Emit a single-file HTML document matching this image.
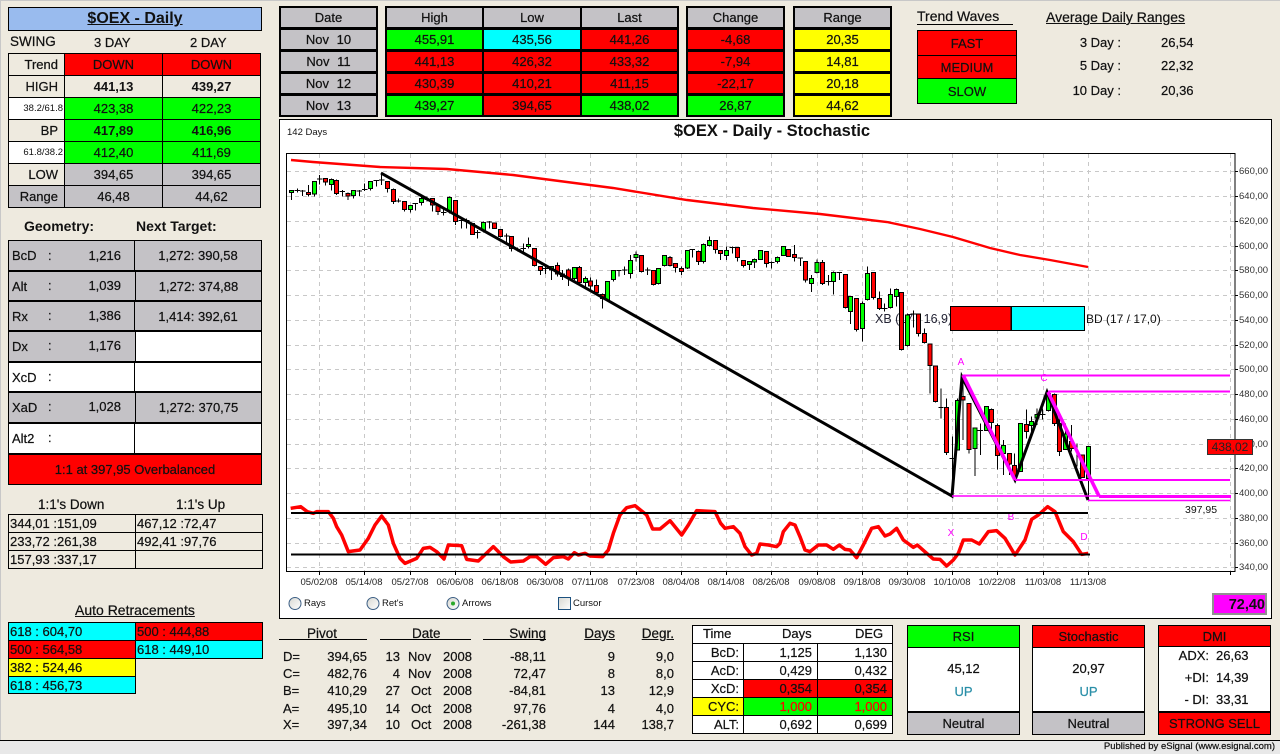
<!DOCTYPE html>
<html><head><meta charset="utf-8"><title>$OEX - Daily</title>
<style>
html,body{margin:0;padding:0}
body{position:relative;width:1280px;height:754px;overflow:hidden;background:#eeeadf;font:13px "Liberation Sans",Arial,sans-serif;color:#111;-webkit-text-stroke:.22px #111}
.c{position:absolute;box-sizing:border-box;display:flex;align-items:center;justify-content:center;white-space:nowrap}
.b{border:1px solid #000}
.t{position:absolute;white-space:nowrap;line-height:16px}
.r{position:absolute;white-space:nowrap;line-height:16px;text-align:right}
.g{background:#c4c2c6}.re{background:#f00}.gr{background:#0f0}.y{background:#ff0}.cy{background:#0ff}.w{background:#fff}.p{background:#eeeadf}
.B{font-weight:bold;-webkit-text-stroke:0}
.l{justify-content:flex-start;padding-left:1px}
.e{justify-content:flex-end;padding-right:5px}
svg{position:absolute;left:0;top:0}
svg text{font-family:"Liberation Sans",Arial,sans-serif;-webkit-text-stroke:0}
</style></head><body>
<div style="position:absolute;left:0;top:0;width:1280px;height:1px;background:#c8c8c8"></div>
<div style="position:absolute;left:0;top:0;width:1px;height:754px;background:#c8c8c8"></div>
<div style="position:absolute;left:0;top:740px;width:1280px;height:14px;background:#e8e8e8;border-top:1px solid #000;box-sizing:border-box"></div>
<div class="t" style="right:5px;top:740px;font-size:9.5px;line-height:14px">Published by eSignal (www.esignal.com)</div>

<!-- title -->
<div class="c b B" style="left:8px;top:7px;width:254px;height:24px;background:#99bbee;font-size:16px;text-decoration:underline">$OEX - Daily</div>
<div class="t" style="left:10px;top:34px;font-size:13.5px">SWING</div>
<div class="t" style="left:94px;top:35px">3 DAY</div>
<div class="t" style="left:190px;top:35px">2 DAY</div>

<!-- swing table -->
<div class="c b p e" style="left:8px;top:53px;width:57px;height:23px;padding-right:6px">Trend</div>
<div class="c b re" style="left:64px;top:53px;width:99px;height:23px">DOWN</div>
<div class="c b re" style="left:162px;top:53px;width:99px;height:23px">DOWN</div>
<div class="c b p e" style="left:8px;top:75px;width:57px;height:23px;padding-right:6px">HIGH</div>
<div class="c b p B" style="left:64px;top:75px;width:99px;height:23px">441,13</div>
<div class="c b p B" style="left:162px;top:75px;width:99px;height:23px">439,27</div>
<div class="c b w e" style="left:8px;top:97px;width:57px;height:23px;font-size:9.5px;padding-right:1px;-webkit-text-stroke:0">38.2/61.8</div>
<div class="c b gr" style="left:64px;top:97px;width:99px;height:23px">423,38</div>
<div class="c b gr" style="left:162px;top:97px;width:99px;height:23px">422,23</div>
<div class="c b p e" style="left:8px;top:119px;width:57px;height:23px;padding-right:6px">BP</div>
<div class="c b gr B" style="left:64px;top:119px;width:99px;height:23px">417,89</div>
<div class="c b gr B" style="left:162px;top:119px;width:99px;height:23px">416,96</div>
<div class="c b w e" style="left:8px;top:141px;width:57px;height:23px;font-size:9.5px;padding-right:1px;-webkit-text-stroke:0">61.8/38.2</div>
<div class="c b gr" style="left:64px;top:141px;width:99px;height:23px">412,40</div>
<div class="c b gr" style="left:162px;top:141px;width:99px;height:23px">411,69</div>
<div class="c b p e" style="left:8px;top:163px;width:57px;height:23px;padding-right:6px">LOW</div>
<div class="c b g" style="left:64px;top:163px;width:99px;height:23px">394,65</div>
<div class="c b g" style="left:162px;top:163px;width:99px;height:23px">394,65</div>
<div class="c b g e" style="left:8px;top:185px;width:57px;height:23px;padding-right:6px">Range</div>
<div class="c b g" style="left:64px;top:185px;width:99px;height:23px">46,48</div>
<div class="c b g" style="left:162px;top:185px;width:99px;height:23px">44,62</div>

<div class="t B" style="left:24px;top:218px;font-size:14px">Geometry:</div>
<div class="t B" style="left:136px;top:218px;font-size:14px">Next Target:</div>

<!-- geometry -->
<div style="position:absolute;left:8px;top:240px;width:254px;height:245px;background:#000"></div>
<div class="c g l" style="left:9px;top:241px;width:125px;height:29px;padding-left:3px">BcD</div><div class="c g" style="left:135px;top:241px;width:126px;height:29px">1,272: 390,58</div>
<div class="c g l" style="left:9px;top:272px;width:126px;height:28px;padding-left:3px">Alt</div><div class="c g" style="left:136px;top:272px;width:125px;height:28px">1,272: 374,88</div>
<div class="c g l" style="left:9px;top:302px;width:125px;height:28px;padding-left:3px">Rx</div><div class="c g" style="left:135px;top:302px;width:126px;height:28px">1,414: 392,61</div>
<div class="c g l" style="left:9px;top:332px;width:126px;height:29px;padding-left:3px">Dx</div><div class="c w" style="left:136px;top:332px;width:125px;height:29px"></div>
<div class="c w l" style="left:9px;top:363px;width:125px;height:28px;padding-left:3px">XcD</div><div class="c w" style="left:135px;top:363px;width:126px;height:28px"></div>
<div class="c g l" style="left:9px;top:393px;width:126px;height:29px;padding-left:3px">XaD</div><div class="c g" style="left:136px;top:393px;width:125px;height:29px">1,272: 370,75</div>
<div class="c w l" style="left:9px;top:424px;width:125px;height:29px;padding-left:3px">Alt2</div><div class="c w" style="left:135px;top:424px;width:126px;height:29px"></div>
<div class="c re" style="left:9px;top:455px;width:252px;height:29px">1:1 at 397,95 Overbalanced</div>
<div class="t" style="left:48px;top:248px">:</div><div class="t" style="left:48px;top:278px">:</div><div class="t" style="left:48px;top:308px">:</div><div class="t" style="left:48px;top:338px">:</div><div class="t" style="left:48px;top:369px">:</div><div class="t" style="left:48px;top:399px">:</div><div class="t" style="left:48px;top:430px">:</div>
<div class="r" style="left:60px;width:61px;top:248px">1,216</div>
<div class="r" style="left:60px;width:61px;top:278px">1,039</div>
<div class="r" style="left:60px;width:61px;top:308px">1,386</div>
<div class="r" style="left:60px;width:61px;top:338px">1,176</div>
<div class="r" style="left:60px;width:61px;top:399px">1,028</div>

<!-- 1:1 -->
<div class="t" style="left:38px;top:497px;font-size:13.5px">1:1's Down</div>
<div class="t" style="left:176px;top:497px;font-size:13.5px">1:1's Up</div>
<div class="c b l" style="left:8px;top:514px;width:128px;height:19px">344,01 :151,09</div><div class="c b l" style="left:135px;top:514px;width:128px;height:19px">467,12 :72,47</div>
<div class="c b l" style="left:8px;top:532px;width:128px;height:19px">233,72 :261,38</div><div class="c b l" style="left:135px;top:532px;width:128px;height:19px">492,41 :97,76</div>
<div class="c b l" style="left:8px;top:550px;width:128px;height:19px">157,93 :337,17</div><div class="c b l" style="left:135px;top:550px;width:128px;height:19px"></div>

<div class="t" style="left:75px;top:602px;text-decoration:underline;font-size:14px">Auto Retracements</div>
<div class="c b cy l" style="left:8px;top:622px;width:128px;height:19px">618 : 604,70</div><div class="c b re l" style="left:135px;top:622px;width:128px;height:19px">500 : 444,88</div>
<div class="c b re l" style="left:8px;top:640px;width:128px;height:19px">500 : 564,58</div><div class="c b cy l" style="left:135px;top:640px;width:128px;height:19px">618 : 449,10</div>
<div class="c b y l" style="left:8px;top:658px;width:128px;height:19px">382 : 524,46</div>
<div class="c b cy l" style="left:8px;top:676px;width:128px;height:18px">618 : 456,73</div>

<!-- date table -->
<div style="position:absolute;left:279px;top:6px;width:99px;height:111px;background:#000"></div>
<div class="c g" style="left:281px;top:8px;width:95px;height:19px">Date</div>
<div class="c g" style="left:281px;top:30px;width:95px;height:19px;word-spacing:4px">Nov 10</div>
<div class="c g" style="left:281px;top:52px;width:95px;height:19px;word-spacing:4px">Nov 11</div>
<div class="c g" style="left:281px;top:74px;width:95px;height:19px;word-spacing:4px">Nov 12</div>
<div class="c g" style="left:281px;top:96px;width:95px;height:19px;word-spacing:4px">Nov 13</div>

<!-- HLC -->
<div style="position:absolute;left:385px;top:6px;width:294px;height:111px;background:#000"></div>
<div class="c g" style="left:387px;top:8px;width:95px;height:19px">High</div><div class="c g" style="left:484px;top:8px;width:96px;height:19px">Low</div><div class="c g" style="left:582px;top:8px;width:95px;height:19px">Last</div>
<div class="c gr" style="left:387px;top:30px;width:95px;height:19px">455,91</div><div class="c cy" style="left:484px;top:30px;width:96px;height:19px">435,56</div><div class="c re" style="left:582px;top:30px;width:95px;height:19px">441,26</div>
<div class="c re" style="left:387px;top:52px;width:95px;height:19px">441,13</div><div class="c re" style="left:484px;top:52px;width:96px;height:19px">426,32</div><div class="c re" style="left:582px;top:52px;width:95px;height:19px">433,32</div>
<div class="c re" style="left:387px;top:74px;width:95px;height:19px">430,39</div><div class="c re" style="left:484px;top:74px;width:96px;height:19px">410,21</div><div class="c re" style="left:582px;top:74px;width:95px;height:19px">411,15</div>
<div class="c gr" style="left:387px;top:96px;width:95px;height:19px">439,27</div><div class="c re" style="left:484px;top:96px;width:96px;height:19px">394,65</div><div class="c gr" style="left:582px;top:96px;width:95px;height:19px">438,02</div>

<!-- change -->
<div style="position:absolute;left:686px;top:6px;width:99px;height:111px;background:#000"></div>
<div class="c g" style="left:688px;top:8px;width:95px;height:19px">Change</div>
<div class="c re" style="left:688px;top:30px;width:95px;height:19px">-4,68</div>
<div class="c re" style="left:688px;top:52px;width:95px;height:19px">-7,94</div>
<div class="c re" style="left:688px;top:74px;width:95px;height:19px">-22,17</div>
<div class="c gr" style="left:688px;top:96px;width:95px;height:19px">26,87</div>
<!-- range -->
<div style="position:absolute;left:793px;top:6px;width:99px;height:111px;background:#000"></div>
<div class="c g" style="left:795px;top:8px;width:95px;height:19px">Range</div>
<div class="c y" style="left:795px;top:30px;width:95px;height:19px">20,35</div>
<div class="c y" style="left:795px;top:52px;width:95px;height:19px">14,81</div>
<div class="c y" style="left:795px;top:74px;width:95px;height:19px">20,18</div>
<div class="c y" style="left:795px;top:96px;width:95px;height:19px">44,62</div>

<!-- trend waves -->
<div class="t" style="left:917px;top:9px;width:96px;border-bottom:1px solid #000;line-height:15px;font-size:14px">Trend Waves</div>
<div class="c b re" style="left:917px;top:30px;width:100px;height:26px">FAST</div>
<div class="c b re" style="left:917px;top:55px;width:100px;height:24px">MEDIUM</div>
<div class="c b gr" style="left:917px;top:78px;width:100px;height:26px">SLOW</div>
<div class="t" style="left:1046px;top:9px;text-decoration:underline;font-size:14px">Average Daily Ranges</div>
<div class="r" style="left:1060px;width:61px;top:35px">3 Day :</div><div class="t" style="left:1161px;top:35px">26,54</div>
<div class="r" style="left:1060px;width:61px;top:58px">5 Day :</div><div class="t" style="left:1161px;top:58px">22,32</div>
<div class="r" style="left:1060px;width:61px;top:83px">10 Day :</div><div class="t" style="left:1161px;top:83px">20,36</div>

<!-- chart frame -->
<div style="position:absolute;box-sizing:border-box;left:279px;top:119px;width:993px;height:500px;background:#fff;border:1px solid #000"></div>
<svg width="1280" height="754" viewBox="0 0 1280 754">
<g fill="none" stroke="#c8c8c8" stroke-dasharray="4 4" shape-rendering="crispEdges">
<path d="M287 171.5H1234M287 196.5H1234M287 221.5H1234M287 246.5H1234M287 270.5H1234M287 295.5H1234M287 320.5H1234M287 345.5H1234M287 369.5H1234M287 394.5H1234M287 419.5H1234M287 444.5H1234M287 468.5H1234M287 493.5H1234M287 518.5H1234M287 543.5H1234M287 567.5H1234"/>
<path d="M319.5 154V571M364.5 154V571M410.5 154V571M455.5 154V571M500.5 154V571M545.5 154V571M590.5 154V571M636.5 154V571M681.5 154V571M726.5 154V571M771.5 154V571M817.5 154V571M862.5 154V571M907.5 154V571M952.5 154V571M997.5 154V571M1043.5 154V571M1088.5 154V571M1230.5 154V571"/>
</g>
<path d="M286.5 153.5H1235V571.5H286.5Z" fill="none" stroke="#000" stroke-width="1" shape-rendering="crispEdges"/>
<path d="M319.5 571V575M364.5 571V575M410.5 571V575M455.5 571V575M500.5 571V575M545.5 571V575M590.5 571V575M636.5 571V575M681.5 571V575M726.5 571V575M771.5 571V575M817.5 571V575M862.5 571V575M907.5 571V575M952.5 571V575M997.5 571V575M1043.5 571V575M1088.5 571V575M1230.5 571V575M1235 171.5H1238M1235 196.5H1238M1235 221.5H1238M1235 246.5H1238M1235 270.5H1238M1235 295.5H1238M1235 320.5H1238M1235 345.5H1238M1235 369.5H1238M1235 394.5H1238M1235 419.5H1238M1235 444.5H1238M1235 468.5H1238M1235 493.5H1238M1235 518.5H1238M1235 543.5H1238M1235 567.5H1238" stroke="#000" fill="none" shape-rendering="crispEdges"/>

<g font-size="9.5" fill="#333">
<text x="1239" y="174">660,00</text><text x="1239" y="199">640,00</text><text x="1239" y="224">620,00</text><text x="1239" y="249">600,00</text><text x="1239" y="273">580,00</text><text x="1239" y="298">560,00</text><text x="1239" y="323">540,00</text><text x="1239" y="348">520,00</text><text x="1239" y="372">500,00</text><text x="1239" y="397">480,00</text><text x="1239" y="422">460,00</text><text x="1239" y="447">440,00</text><text x="1239" y="471">420,00</text><text x="1239" y="496">400,00</text><text x="1239" y="521">380,00</text><text x="1239" y="546">360,00</text><text x="1239" y="570">340,00</text>
</g>
<g font-size="9.5" fill="#222" text-anchor="middle">
<text x="319" y="585">05/02/08</text><text x="364" y="585">05/14/08</text><text x="410" y="585">05/27/08</text><text x="455" y="585">06/06/08</text><text x="500" y="585">06/18/08</text><text x="545" y="585">06/30/08</text><text x="590" y="585">07/11/08</text><text x="636" y="585">07/23/08</text><text x="681" y="585">08/04/08</text><text x="726" y="585">08/14/08</text><text x="771" y="585">08/26/08</text><text x="817" y="585">09/08/08</text><text x="862" y="585">09/18/08</text><text x="907" y="585">09/30/08</text><text x="952" y="585">10/10/08</text><text x="997" y="585">10/22/08</text><text x="1043" y="585">11/03/08</text><text x="1088" y="585">11/13/08</text>
</g>
<text x="287" y="135" font-size="9.5" fill="#111">142 Days</text>
<text x="772" y="136" font-size="16.5" font-weight="bold" text-anchor="middle" fill="#111">$OEX - Daily - Stochastic</text>
<text x="875" y="323" font-size="12.5" fill="#223">XB (17 / 16,9)</text>

<!-- candles -->
<g transform="translate(280 150) scale(.33333)" stroke="#000" stroke-width="3.4" fill="none" shape-rendering="crispEdges">
<path d="M34 120V150M52 115V128M68 120V138M85 105V140M103 93V140M119 75V103M136 85V107M154 85V122M170 88V135M187 120V140M204 128V150M220 120V145M238 120V138M254 100V123M271 94V122M289 90V110M305 68V105M322 93V128M340 115V162M355 145V158M373 153V185M391 165V188M406 160V182M424 135V167M441 140V155M457 145V185M474 160V195M491 175V197M508 140V190M526 150V225M544 205V235M560 205V235M577 220V255M593 240V266M610 215V248M628 213V235M644 218V235M661 237V263M680 250V285M694 258V305M713 292V305M730 280V305M746 262V295M763 295V350M781 348V375M797 345V372M815 348V390M832 338V380M848 360V390M865 355V408M883 352V390M899 348V398M916 380V410M932 382V425M949 388V435M967 430V476M983 393V455M1000 362V395M1017 360V380M44 121h16M60 123h16M111 87h16M179 125h16M230 123h16M246 119h16M281 91h16M297 90h16M347 153h16M398 160h16M433 148h16M483 187h16M536 212h16M552 212h16M585 247h16M620 216h16M672 258h16M705 298h16M722 296h16M789 355h16M1009 362h16"/>
<path fill="#f00" d="M79 127h12v6h-12zM130 85h12v11h-12zM164 92h12v38h-12zM198 130h12v8h-12zM316 94h12v21h-12zM334 118h12v36h-12zM367 154h12v24h-12zM451 146h12v19h-12zM468 167h12v18h-12zM520 151h12v64h-12zM571 221h12v32h-12zM638 219h12v17h-12zM655 238h12v22h-12zM688 259h12v36h-12zM757 295h12v52h-12zM775 349h12v12h-12zM826 346h12v26h-12zM842 372h12v8h-12zM859 360h12v24h-12zM893 352h12v45h-12zM926 393h12v15h-12zM943 406h12v22h-12zM961 433h12v12h-12z"/>
<path fill="#0f0" d="M28 121h12v6h-12zM97 94h12v38h-12zM148 88h12v15h-12zM214 122h12v14h-12zM265 94h12v21h-12zM385 166h12v12h-12zM418 145h12v12h-12zM502 142h12v43h-12zM604 217h12v25h-12zM740 283h12v7h-12zM809 349h12v11h-12zM877 352h12v33h-12zM910 385h12v12h-12zM977 395h12v55h-12zM994 362h12v26h-12z"/>
</g>
<g transform="translate(620 200) scale(.33333)" stroke="#000" stroke-width="3.4" fill="none" shape-rendering="crispEdges">
<path d="M14 200V225M31 165V236M48 155V185M65 165V218M83 202V225M100 210V257M116 205V254M133 165V200M150 168V200M167 190V218M184 200V225M203 150V207M217 148V173M235 152V195M250 130V190M268 110V140M286 120V160M302 150V180M319 140V180M337 140V160M352 142V185M370 180V203M388 183V210M404 175V204M421 150V180M439 153V203M455 185V205M472 170V190M490 138V168M506 147V170M523 135V185M541 172V198M557 183V248M574 225V276M591 178V220M607 180V255M625 225V257M640 215V283M658 216V240M676 224V325M691 290V372M709 295V395M727 305V425M743 200V302M760 218V298M778 275V330M794 310V335M811 265V325M829 265V320M845 278V452M862 340V440M880 332V382M895 340V410M913 385V430M6 210h16M75 210h16M209 148h16M329 143h16M447 187h16M533 174h16M617 244h16M650 218h16M786 326h16M872 342h16"/>
<path fill="#f00" d="M59 167h12v48h-12zM94 211h12v42h-12zM144 172h12v24h-12zM161 191h12v12h-12zM178 205h12v9h-12zM229 154h12v30h-12zM280 122h12v26h-12zM296 152h12v8h-12zM346 143h12v29h-12zM364 182h12v14h-12zM433 155h12v35h-12zM500 149h12v20h-12zM517 163h12v9h-12zM551 184h12v56h-12zM601 187h12v63h-12zM670 224h12v98h-12zM703 296h12v92h-12zM754 218h12v74h-12zM772 296h12v29h-12zM839 278h12v171h-12zM889 342h12v58h-12zM907 400h12v28h-12z"/>
<path fill="#0f0" d="M25 182h12v38h-12zM42 164h12v8h-12zM110 206h12v44h-12zM127 166h12v31h-12zM197 152h12v52h-12zM244 133h12v52h-12zM262 122h12v14h-12zM313 152h12v14h-12zM382 185h12v8h-12zM398 178h12v8h-12zM415 152h12v26h-12zM466 172h12v12h-12zM484 140h12v26h-12zM568 236h12v14h-12zM585 187h12v30h-12zM634 218h12v26h-12zM685 290h12v44h-12zM721 311h12v74h-12zM737 221h12v77h-12zM805 284h12v38h-12zM823 268h12v22h-12zM856 345h12v91h-12z"/>
</g>
<g transform="translate(920 340) scale(.33333)" stroke="#000" stroke-width="3.4" fill="none" shape-rendering="crispEdges">
<path d="M30 12V160M46 78V188M63 145V235M79 175V345M97 290V415M113 175V330M129 110V300M147 190V340M165 262V408M181 250V345M199 198V272M215 205V280M232 250V388M250 300V405M268 340V405M284 340V412M301 250V395M319 208V295M335 230V285M351 205V255M368 205V238M385 155V215M403 160V258M419 235V348M436 250V330M454 255V335M471 310V380M488 345V412M505 318V482M55 203h16M89 355h16M173 272h16M360 224h16"/>
<path fill="#f00" d="M24 12h12v64h-12zM40 78h12v107h-12zM73 202h12v136h-12zM123 170h12v10h-12zM141 190h12v138h-12zM209 208h12v40h-12zM226 256h12v91h-12zM262 341h12v31h-12zM278 377h12v35h-12zM313 253h12v22h-12zM397 163h12v87h-12zM413 250h12v85h-12zM448 305h12v20h-12zM482 345h12v67h-12z"/>
<path fill="#0f0" d="M107 182h12v148h-12zM159 264h12v61h-12zM193 199h12v73h-12zM244 316h12v24h-12zM295 250h12v145h-12zM329 245h12v12h-12zM345 224h12v10h-12zM379 160h12v52h-12zM430 282h12v46h-12zM499 320h12v95h-12z"/>
</g>

<!-- MA -->
<path d="M291 160L313 162L380 167L447 169L513 175L613 188L687 200L753 208L820 214L887 222L920 229L953 237L990 248L1020 255L1050 260L1088 267" fill="none" stroke="#f00" stroke-width="2.4"/>
<!-- black lines -->
<path d="M381 173L607 300L952 496L962 377L1015 480L1047 392L1088 500" fill="none" stroke="#000" stroke-width="3"/>
<!-- magenta -->
<g fill="none" stroke="#f0f">
<path d="M963 375L1015 480M1048 392L1099 496" stroke-width="3.6"/>
<path d="M963 375.5H1230M1048 391.5H1230M1015 480H1230" stroke-width="2"/>
<path d="M952 496H1099" stroke-width="1.6"/>
<path d="M1099 496.5H1231" stroke-width="3"/>
<path d="M1088 500.5H1230" stroke-width="1.6"/>
</g>
<g font-size="10" fill="#f0f" text-anchor="middle">
<text x="961" y="365">A</text><text x="1044" y="381">C</text><text x="1011" y="520">B</text><text x="951" y="536">X</text><text x="1084" y="540">D</text>
</g>
<!-- stochastic -->
<g transform="translate(280 490) scale(.33333)" fill="none">
<path stroke="#f00" stroke-width="10.5" stroke-linejoin="round" d="M32 55L62 50L82 65L100 70L110 65L145 65L160 85L170 110L185 135L205 185L240 180L265 145L285 105L305 78L325 105L340 160L360 205L375 220L410 205L430 175L450 172L470 185L492 207L505 165L545 167L560 208L595 213L640 170L670 200L692 216L730 213L750 200L770 200L797 223L820 203L850 200L865 207L883 188L895 195L915 190L930 198L968 200L985 180L1000 130L1020 75L1040 53L1065 47L1100 75L1118 117L1140 117L1170 92L1205 135L1225 105L1250 62L1305 65L1322 100L1335 115L1360 110L1380 130L1395 170L1415 195L1430 190L1440 162L1465 165L1490 170L1500 160L1510 125L1530 100L1545 105L1560 140L1575 180L1590 185L1615 165L1640 165L1660 178L1678 165L1695 178L1710 180L1730 203L1750 165L1775 115L1795 110L1815 138L1830 132L1850 115L1870 150L1900 172L1912 165L1940 190L1960 207L1980 208L2000 228L2020 210L2035 190L2050 150L2075 150L2098 162L2125 125L2150 122L2175 145L2205 195L2235 150L2255 88L2275 75L2303 50L2325 65L2350 125L2380 155L2405 193L2425 190"/>
</g>
<path d="M291 513H1088M291 554.5H1090" stroke="#000" stroke-width="2" fill="none"/>

<!-- xabcd box -->
<path d="M950.500 306.500H1011V330.500H950.500Z" fill="#f00" stroke="#000" shape-rendering="crispEdges"/>
<path d="M1011.500 306.500H1084.500V330.500H1011.500Z" fill="#0ff" stroke="#000" shape-rendering="crispEdges"/>
<text x="1086" y="323" font-size="12" fill="#111">BD (17 / 17,0)</text>

<path d="M1207.500 439.500H1252.500V454.500H1207.500Z" fill="#f00" stroke="#333" shape-rendering="crispEdges"/>
<text x="1230" y="451" font-size="12" fill="#222" text-anchor="middle">438,02</text>
<text x="1185" y="513" font-size="10.500" fill="#111">397,95</text>

<!-- controls -->
<defs><linearGradient id="rd" x1="0" y1="0" x2="1" y2="1"><stop offset="0" stop-color="#d8d8d2"/><stop offset="1" stop-color="#ffffff"/></linearGradient></defs>
<g stroke="#3c5f85" fill="url(#rd)"><circle cx="295" cy="603.500" r="6"/><circle cx="373" cy="603.500" r="6"/><circle cx="453" cy="603.500" r="6"/></g>
<circle cx="453" cy="603.500" r="2" fill="#2aa82a"/>
<path d="M558.500 597.500H570.500V609.500H558.500Z" fill="url(#rd)" stroke="#1c5180" shape-rendering="crispEdges"/>
<g font-size="9.500" fill="#111"><text x="304" y="606">Rays</text><text x="382" y="606">Ret's</text><text x="462" y="606">Arrows</text><text x="573" y="606">Cursor</text></g>
<path d="M1213 594H1266V614H1213Z" fill="#f0f" stroke="#909090" stroke-width="2" shape-rendering="crispEdges"/>
<text x="1265" y="609" font-size="14.500" font-weight="bold" fill="#111" text-anchor="end">72,40</text>
</svg>

<!-- pivots -->
<div class="t" style="left:307px;top:626px;font-size:13.5px">Pivot</div>
<div style="position:absolute;left:279px;top:639px;width:88px;height:1px;background:#000"></div>
<div class="t" style="left:412px;top:626px;font-size:13.5px">Date</div>
<div style="position:absolute;left:380px;top:639px;width:91px;height:1px;background:#000"></div>
<div class="r" style="left:483px;width:63px;top:626px;font-size:13.5px">Swing</div>
<div style="position:absolute;left:483px;top:639px;width:63px;height:1px;background:#000"></div>
<div class="r" style="left:575px;width:40px;top:626px;text-decoration:underline;font-size:13.5px">Days</div>
<div class="r" style="left:624px;width:50px;top:626px;text-decoration:underline;font-size:13.5px">Degr.</div>

<div class="t" style="left:283px;top:649px">D=</div><div class="r" style="left:320px;width:47px;top:649px">394,65</div><div class="r" style="left:380px;width:20px;top:649px">13</div><div class="t" style="left:408px;top:649px">Nov</div><div class="t" style="left:443px;top:649px">2008</div><div class="r" style="left:490px;width:56px;top:649px">-88,11</div><div class="r" style="left:580px;width:35px;top:649px">9</div><div class="r" style="left:630px;width:44px;top:649px">9,0</div>
<div class="t" style="left:283px;top:666px">C=</div><div class="r" style="left:320px;width:47px;top:666px">482,76</div><div class="r" style="left:380px;width:20px;top:666px">4</div><div class="t" style="left:408px;top:666px">Nov</div><div class="t" style="left:443px;top:666px">2008</div><div class="r" style="left:490px;width:56px;top:666px">72,47</div><div class="r" style="left:580px;width:35px;top:666px">8</div><div class="r" style="left:630px;width:44px;top:666px">8,0</div>
<div class="t" style="left:283px;top:683px">B=</div><div class="r" style="left:320px;width:47px;top:683px">410,29</div><div class="r" style="left:380px;width:20px;top:683px">27</div><div class="t" style="left:411px;top:683px">Oct</div><div class="t" style="left:443px;top:683px">2008</div><div class="r" style="left:490px;width:56px;top:683px">-84,81</div><div class="r" style="left:580px;width:35px;top:683px">13</div><div class="r" style="left:630px;width:44px;top:683px">12,9</div>
<div class="t" style="left:283px;top:701px">A=</div><div class="r" style="left:320px;width:47px;top:701px">495,10</div><div class="r" style="left:380px;width:20px;top:701px">14</div><div class="t" style="left:411px;top:701px">Oct</div><div class="t" style="left:443px;top:701px">2008</div><div class="r" style="left:490px;width:56px;top:701px">97,76</div><div class="r" style="left:580px;width:35px;top:701px">4</div><div class="r" style="left:630px;width:44px;top:701px">4,0</div>
<div class="t" style="left:283px;top:717px">X=</div><div class="r" style="left:320px;width:47px;top:717px">397,34</div><div class="r" style="left:380px;width:20px;top:717px">10</div><div class="t" style="left:411px;top:717px">Oct</div><div class="t" style="left:443px;top:717px">2008</div><div class="r" style="left:490px;width:56px;top:717px">-261,38</div><div class="r" style="left:580px;width:35px;top:717px">144</div><div class="r" style="left:630px;width:44px;top:717px">138,7</div>

<!-- time table -->
<div class="c w" style="left:692px;top:625px;width:201px;height:19px;border:1px solid #000"></div>
<div class="t" style="left:703px;top:626px">Time</div><div class="t" style="left:782px;top:626px">Days</div><div class="t" style="left:855px;top:626px">DEG</div>
<div class="c b w e" style="left:692px;top:643px;width:52px;height:19px;padding-right:4px">BcD:</div><div class="c b w e" style="left:743px;top:643px;width:75px;height:19px">1,125</div><div class="c b w e" style="left:817px;top:643px;width:76px;height:19px">1,130</div>
<div class="c b w e" style="left:692px;top:661px;width:52px;height:19px;padding-right:4px">AcD:</div><div class="c b w e" style="left:743px;top:661px;width:75px;height:19px">0,429</div><div class="c b w e" style="left:817px;top:661px;width:76px;height:19px">0,432</div>
<div class="c b w e" style="left:692px;top:679px;width:52px;height:19px;padding-right:4px">XcD:</div><div class="c b re e" style="left:743px;top:679px;width:75px;height:19px">0,354</div><div class="c b re e" style="left:817px;top:679px;width:76px;height:19px">0,354</div>
<div class="c b y e" style="left:692px;top:697px;width:52px;height:19px;padding-right:4px">CYC:</div><div class="c b gr e" style="left:743px;top:697px;width:75px;height:19px;color:#f00;-webkit-text-stroke:.22px #f00">1,000</div><div class="c b gr e" style="left:817px;top:697px;width:76px;height:19px;color:#f00;-webkit-text-stroke:.22px #f00">1,000</div>
<div class="c b w e" style="left:692px;top:715px;width:52px;height:19px;padding-right:4px">ALT:</div><div class="c b w e" style="left:743px;top:715px;width:75px;height:19px">0,692</div><div class="c b w e" style="left:817px;top:715px;width:76px;height:19px">0,699</div>

<!-- RSI -->
<div class="c b w" style="left:907px;top:625px;width:113px;height:110px"></div>
<div class="c b gr" style="left:907px;top:625px;width:113px;height:23px">RSI</div>
<div class="c" style="left:907px;top:660px;width:113px;height:16px">45,12</div>
<div class="c" style="left:907px;top:683px;width:113px;height:16px;color:#2a8fa8;-webkit-text-stroke:.22px #2a8fa8">UP</div>
<div class="c g" style="left:907px;top:711px;width:113px;height:24px;border:1px solid #000;border-top-width:2px">Neutral</div>
<!-- Stochastic -->
<div class="c b w" style="left:1032px;top:625px;width:113px;height:110px"></div>
<div class="c b re" style="left:1032px;top:625px;width:113px;height:23px">Stochastic</div>
<div class="c" style="left:1032px;top:660px;width:113px;height:16px">20,97</div>
<div class="c" style="left:1032px;top:683px;width:113px;height:16px;color:#2a8fa8;-webkit-text-stroke:.22px #2a8fa8">UP</div>
<div class="c g" style="left:1032px;top:711px;width:113px;height:24px;border:1px solid #000;border-top-width:2px">Neutral</div>
<!-- DMI -->
<div class="c b w" style="left:1158px;top:625px;width:113px;height:110px"></div>
<div class="c b re" style="left:1158px;top:625px;width:113px;height:22px">DMI</div>
<div class="r" style="left:1170px;width:39px;top:648px">ADX:</div><div class="t" style="left:1216px;top:648px">26,63</div>
<div class="r" style="left:1170px;width:39px;top:670px">+DI:</div><div class="t" style="left:1216px;top:670px">14,39</div>
<div class="r" style="left:1170px;width:39px;top:692px">- DI:</div><div class="t" style="left:1216px;top:692px">33,31</div>
<div class="c re" style="left:1158px;top:711px;width:113px;height:24px;border:1px solid #000;border-top-width:2px">STRONG SELL</div>
</body></html>
